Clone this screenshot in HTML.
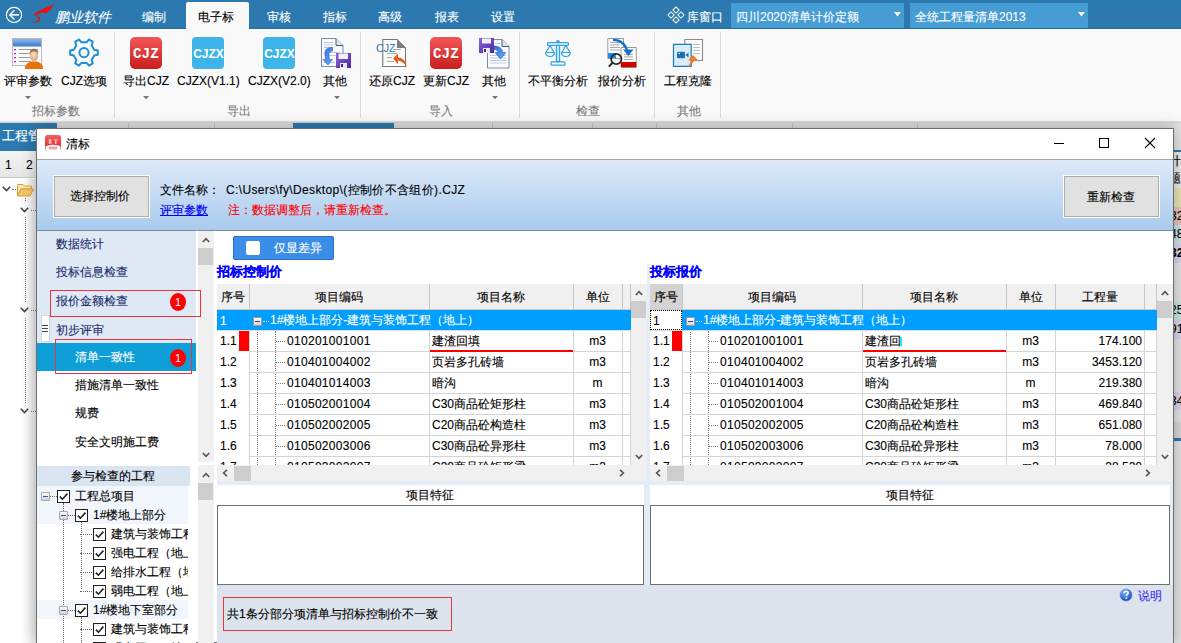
<!DOCTYPE html>
<html><head><meta charset="utf-8">
<style>
*{box-sizing:border-box;margin:0;padding:0}
html,body{width:1181px;height:643px;overflow:hidden;background:#fff;font-family:"Liberation Sans",sans-serif;font-size:12px;color:#000;position:relative}
.a{position:absolute}
.t{position:absolute;white-space:nowrap;line-height:20px;font-size:12px;-webkit-text-stroke:0.12px currentColor}
svg{position:absolute;overflow:visible}
</style></head><body>

<!-- ============ TITLE BAR ============ -->
<div class="a" style="left:0;top:0;width:1181px;height:29px;background:#2b79ae;border-bottom:1px solid #246c9e"></div>
<svg style="left:5px;top:6px" width="18" height="18" viewBox="0 0 18 18"><circle cx="9" cy="8.9" r="7.6" fill="none" stroke="#fff" stroke-width="1.2"/><path d="M14 8.9H5M9.4 4.3L4.8 8.9L9.4 13.5" fill="none" stroke="#eef4f8" stroke-width="1.6"/></svg>
<svg style="left:28px;top:2px" width="30" height="26" viewBox="0 0 30 26"><path d="M25.5 3.2L21.9 7.7L17.4 11.7L16.8 9.9C12.5 10.5 8.5 12 7 13.3C9 14.3 11.2 15.5 11 17C10.7 18.8 7.5 20.2 4.9 20.7C8.5 20.6 12.6 19 12.1 16.5C11.7 14.8 8.5 13.6 6.2 12.4C10 9.3 17 5.6 25.5 3.2Z" fill="#f00c0c" stroke="#f00c0c" stroke-width="0.5" stroke-linejoin="round"/></svg>
<div class="t" style="left:55px;top:6.5px;font-size:14px;color:#fff;font-style:italic;letter-spacing:0">鹏业软件</div>
<div class="t" style="left:142px;top:7px;font-size:12px;color:#fff">编制</div>
<div class="a" style="left:186px;top:2px;width:63px;height:27px;background:#f9f9f9;border-radius:2px 2px 0 0"></div>
<div class="t" style="left:198px;top:7px;font-size:12px;color:#000">电子标</div>
<div class="t" style="left:267px;top:7px;font-size:12px;color:#fff">审核</div>
<div class="t" style="left:323px;top:7px;font-size:12px;color:#fff">指标</div>
<div class="t" style="left:378px;top:7px;font-size:12px;color:#fff">高级</div>
<div class="t" style="left:435px;top:7px;font-size:12px;color:#fff">报表</div>
<div class="t" style="left:491px;top:7px;font-size:12px;color:#fff">设置</div>
<svg style="left:666px;top:5px" width="20" height="20" viewBox="0 0 20 20"><g transform="rotate(45 10 10)" fill="none" stroke="#fff" stroke-width="1"><rect x="4.3" y="4.3" width="4.4" height="4.4"/><rect x="11.3" y="4.3" width="4.4" height="4.4"/><rect x="4.3" y="11.3" width="4.4" height="4.4"/><rect x="11.3" y="11.3" width="4.4" height="4.4"/></g></svg>
<div class="t" style="left:687px;top:7px;font-size:12px;color:#fff">库窗口</div>
<div class="a" style="left:731px;top:3px;width:173px;height:25px;background:#459dd4"></div>
<div class="t" style="left:736px;top:7px;font-size:12px;color:#fff">四川2020清单计价定额</div>
<svg style="left:894px;top:12px" width="7" height="5" viewBox="0 0 7 5"><path d="M0 0H7L3.5 4.5Z" fill="#fff"/></svg>
<div class="a" style="left:910px;top:3px;width:178px;height:25px;background:#459dd4"></div>
<div class="t" style="left:915px;top:7px;font-size:12px;color:#fff">全统工程量清单2013</div>
<svg style="left:1078px;top:12px" width="7" height="5" viewBox="0 0 7 5"><path d="M0 0H7L3.5 4.5Z" fill="#fff"/></svg>

<!-- ============ RIBBON ============ -->
<div class="a" style="left:0;top:29px;width:1181px;height:93px;background:#f9f9f9;border-bottom:1px solid #e2e2e2"></div>
<!-- ribbon labels -->
<div class="t" style="left:4px;top:71px">评审参数</div>
<div class="t" style="left:61px;top:71px">CJZ选项</div>
<div class="t" style="left:123px;top:71px">导出CJZ</div>
<div class="t" style="left:177px;top:71px">CJZX(V1.1)</div>
<div class="t" style="left:248px;top:71px">CJZX(V2.0)</div>
<div class="t" style="left:323px;top:71px">其他</div>
<div class="t" style="left:369px;top:71px">还原CJZ</div>
<div class="t" style="left:423px;top:71px">更新CJZ</div>
<div class="t" style="left:482px;top:71px">其他</div>
<div class="t" style="left:528px;top:71px">不平衡分析</div>
<div class="t" style="left:598px;top:71px">报价分析</div>
<div class="t" style="left:664px;top:71px">工程克隆</div>
<!-- group labels -->
<div class="t" style="left:32px;top:101px;color:#7b7b7b">招标参数</div>
<div class="t" style="left:227px;top:101px;color:#7b7b7b">导出</div>
<div class="t" style="left:429px;top:101px;color:#7b7b7b">导入</div>
<div class="t" style="left:576px;top:101px;color:#7b7b7b">检查</div>
<div class="t" style="left:677px;top:101px;color:#7b7b7b">其他</div>
<!-- separators -->
<div class="a" style="left:114px;top:32px;width:1px;height:86px;background:#dadada"></div>
<div class="a" style="left:360px;top:32px;width:1px;height:86px;background:#dadada"></div>
<div class="a" style="left:519px;top:32px;width:1px;height:86px;background:#dadada"></div>
<div class="a" style="left:654px;top:32px;width:1px;height:86px;background:#dadada"></div>
<div class="a" style="left:720px;top:32px;width:1px;height:86px;background:#dadada"></div>
<!-- dropdown arrows -->
<svg style="left:25px;top:96px" width="6" height="4" viewBox="0 0 6 4"><path d="M0 0H6L3 3.2Z" fill="#777"/></svg>
<svg style="left:143px;top:96px" width="6" height="4" viewBox="0 0 6 4"><path d="M0 0H6L3 3.2Z" fill="#777"/></svg>
<svg style="left:334px;top:96px" width="6" height="4" viewBox="0 0 6 4"><path d="M0 0H6L3 3.2Z" fill="#777"/></svg>
<svg style="left:492px;top:96px" width="6" height="4" viewBox="0 0 6 4"><path d="M0 0H6L3 3.2Z" fill="#777"/></svg>

<!-- icon: 评审参数 -->
<svg style="left:12px;top:38px" width="32" height="31" viewBox="0 0 32 31">
<defs><linearGradient id="gbar" x1="0" y1="0" x2="0" y2="1"><stop offset="0" stop-color="#8fb8ec"/><stop offset="1" stop-color="#3a78d0"/></linearGradient>
<radialGradient id="gface" cx=".45" cy=".4" r=".6"><stop offset="0" stop-color="#fbe3c8"/><stop offset="1" stop-color="#d9a67a"/></radialGradient></defs>
<rect x="0.5" y="0.5" width="29" height="27" fill="#fbfbfb" stroke="#b9b9b9"/>
<rect x="1" y="1" width="28" height="7.5" fill="url(#gbar)"/>
<g fill="#d000d0"><rect x="2" y="11" width="2" height="1.2"/><rect x="2" y="15" width="2" height="1.2"/><rect x="2" y="19" width="2" height="1.2"/><rect x="2" y="23" width="2" height="1.2"/></g>
<g fill="#9a9a9a"><rect x="7" y="11" width="19" height="1"/><rect x="7" y="15" width="12" height="1"/><rect x="7" y="19" width="12" height="1"/><rect x="7" y="23" width="12" height="1"/></g>
<path d="M13 31C13 26 16 23.5 22 23.5C28 23.5 31 26 31 31Z" fill="#e8710a"/>
<ellipse cx="22" cy="17.5" rx="4.2" ry="5.5" fill="url(#gface)"/>
<path d="M17.8 16C17.6 12.5 19.5 10.8 22 10.8C24.5 10.8 26.4 12.5 26.2 16C25 14 23.5 13.5 22 13.6C20.5 13.5 19 14 17.8 16Z" fill="#9b7050"/>
</svg>
<!-- icon: gear -->
<svg style="left:64px;top:34px" width="40" height="38" viewBox="0 0 40 38">
<path d="M30.19 15.68 L33.83 16.41 L33.83 20.79 L30.19 21.52 L27.63 25.96 L28.81 29.48 L25.02 31.67 L22.56 28.89 L17.44 28.89 L14.98 31.67 L11.19 29.48 L12.37 25.96 L9.81 21.52 L6.17 20.79 L6.17 16.41 L9.81 15.68 L12.37 11.24 L11.19 7.72 L14.98 5.53 L17.44 8.31 L22.56 8.31 L25.02 5.53 L28.81 7.72 L27.63 11.24Z" fill="none" stroke="#1b8fd8" stroke-width="2" stroke-linejoin="round"/>
<circle cx="20" cy="18.6" r="4.6" fill="none" stroke="#1b8fd8" stroke-width="2"/>
</svg>
<!-- icon: CJZ red -->
<svg style="left:130px;top:37px" width="32" height="32" viewBox="0 0 32 32">
<defs><linearGradient id="gred" x1="0" y1="0" x2="0" y2="1"><stop offset="0" stop-color="#f25656"/><stop offset="1" stop-color="#c81e1e"/></linearGradient></defs>
<rect x="0" y="0" width="32" height="32" rx="5" fill="url(#gred)"/>
<text x="3" y="20.7" font-family="Liberation Mono" font-weight="bold" font-size="14" fill="#fff" textLength="25.8" lengthAdjust="spacingAndGlyphs">CJZ</text>
</svg>
<!-- icon: CJZX blue 1 -->
<svg style="left:192px;top:37px" width="32" height="32" viewBox="0 0 32 32">
<rect x="0" y="0" width="32" height="32" rx="4" fill="#3db5ea"/>
<text x="1.2" y="21.3" font-family="Liberation Sans" font-weight="bold" font-size="13.5" fill="#fff" textLength="30.5" lengthAdjust="spacingAndGlyphs">CJZX</text>
</svg>
<svg style="left:263px;top:37px" width="32" height="32" viewBox="0 0 32 32">
<rect x="0" y="0" width="32" height="32" rx="4" fill="#3db5ea"/>
<text x="1.2" y="21.3" font-family="Liberation Sans" font-weight="bold" font-size="13.5" fill="#fff" textLength="30.5" lengthAdjust="spacingAndGlyphs">CJZX</text>
</svg>
<!-- icon: 其他 (doc + arrow + floppy) -->
<svg style="left:316px;top:34px" width="40" height="38" viewBox="0 0 40 38">
<defs><linearGradient id="gfl" x1="0" y1="0" x2="1" y2="1"><stop offset="0" stop-color="#8a62d8"/><stop offset="1" stop-color="#4a2aa0"/></linearGradient>
<linearGradient id="garr" x1="0" y1="0" x2="1" y2="1"><stop offset="0" stop-color="#2a6ee0"/><stop offset="1" stop-color="#6ab0f0"/></linearGradient></defs>
<path d="M5.5 4.5H20L27 11.5V32.5H5.5Z" fill="#fbfcff" stroke="#7d8aa8"/>
<path d="M20 4.5V11.5H27" fill="#dfe6f5" stroke="#4a5570"/>
<g fill="#b8c0d0"><rect x="8" y="8" width="9" height=".9"/><rect x="8" y="10.5" width="9" height=".9"/><rect x="8" y="13" width="9" height=".9"/><rect x="12" y="18" width="12" height=".9"/><rect x="12" y="21" width="12" height=".9"/><rect x="8" y="28" width="11" height=".9"/></g>
<path d="M16.5 13.5C11 13 8 16 9 21L9.5 25.5L7 25.5L12 31L16.5 25.5L13.5 25.5L13 21C12.8 18.5 14 17 16.5 17Z" fill="url(#garr)" stroke="#1a4fb8" stroke-width=".5"/>
<rect x="20" y="19" width="15" height="15" fill="url(#gfl)"/>
<rect x="22.5" y="19.5" width="9.5" height="5.5" fill="#f2f0f8"/>
<rect x="24" y="29" width="7" height="5" fill="#e8e6f0"/>
<rect x="25" y="30" width="2" height="3" fill="#3a2a80"/>
</svg>
<!-- icon: 还原CJZ -->
<svg style="left:370px;top:34px" width="42" height="38" viewBox="0 0 42 38">
<path d="M12.8 5.5H27L35.5 14V32.5H12.8Z" fill="#fdfdfd" stroke="#777" stroke-width="1.1"/>
<path d="M27 5.5L35.5 14H27Z" fill="#7d7d7d"/>
<g fill="#a8a8a8"><rect x="23" y="15" width="8" height="1"/><rect x="17" y="19" width="10" height="1"/><rect x="17" y="23" width="5" height="1"/><rect x="17" y="27" width="7" height="1"/></g>
<text x="6" y="18" font-family="Liberation Sans" font-size="11" fill="#2a78b8" textLength="19.5" lengthAdjust="spacingAndGlyphs">CJZ</text>
<path d="M36.5 33C36.5 27 33 24 28 23.5V19.5L23 24.5L28 30V26.5C31.5 27 34.5 29 36.5 33Z" fill="#ea5a12"/>
</svg>
<!-- icon: 更新CJZ red -->
<svg style="left:430px;top:37px" width="32" height="32" viewBox="0 0 32 32">
<rect x="0" y="0" width="32" height="32" rx="5" fill="url(#gred)"/>
<text x="3" y="20.7" font-family="Liberation Mono" font-weight="bold" font-size="14" fill="#fff" textLength="25.8" lengthAdjust="spacingAndGlyphs">CJZ</text>
</svg>
<!-- icon: 其他 2 (floppy + doc + arrow) -->
<svg style="left:475px;top:34px" width="40" height="38" viewBox="0 0 40 38">
<path d="M12.5 5.5H27L34 12.5V34H12.5Z" fill="#fbfcff" stroke="#7d8aa8"/>
<path d="M27 5.5V12.5H34" fill="#dfe6f5" stroke="#4a5570"/>
<g fill="#b8c0d0"><rect x="15" y="21" width="16" height=".9"/><rect x="15" y="23.5" width="16" height=".9"/><rect x="15" y="26" width="16" height=".9"/><rect x="15" y="28.5" width="16" height=".9"/><rect x="20" y="9" width="5" height=".9"/></g>
<rect x="4" y="4" width="15" height="15" fill="url(#gfl)"/>
<rect x="7" y="4.5" width="9" height="5" fill="#f2f0f8"/>
<rect x="8" y="14" width="7" height="5" fill="#e8e6f0"/>
<rect x="9" y="15" width="2" height="3" fill="#3a2a80"/>
<path d="M19 12C24 12 27 14 28 18.5L31 18.5L25.5 25L20 18.5L23 18.5C22.5 16.5 21 15.5 19 15.5Z" fill="url(#garr)" stroke="#1a4fb8" stroke-width=".5"/>
</svg>
<!-- icon: 不平衡分析 (balance) -->
<svg style="left:538px;top:34px" width="40" height="38" viewBox="0 0 40 38">
<g fill="none" stroke="#2ea3e6" stroke-width="1.2">
<rect x="9.6" y="8.6" width="20.8" height="2.8" rx=".6"/>
<rect x="18.4" y="11.4" width="3.2" height="16.2" fill="#bfe3f7"/>
<rect x="13" y="27.8" width="14" height="3.4" rx=".6"/>
<path d="M12.1 11.5L8.2 18.2M12.1 11.5L15.9 18.2"/><path d="M27.9 11.5L24 18.2M27.9 11.5L31.8 18.2"/>
<path d="M7.6 18.5H16.6C16.3 21 14.6 22.6 12.1 22.6C9.6 22.6 7.9 21 7.6 18.5Z"/>
<path d="M23.4 18.5H32.4C32.1 21 30.4 22.6 27.9 22.6C25.4 22.6 23.7 21 23.4 18.5Z"/>
</g>
<circle cx="20" cy="7.6" r="1.7" fill="#2ea3e6"/>
</svg>
<!-- icon: 报价分析 -->
<svg style="left:600px;top:34px" width="40" height="38" viewBox="0 0 40 38">
<path d="M7.8 4.5H23.5V24.5H7.8Z" fill="#fdfdfd" stroke="#9a9a9a"/>
<g fill="#a0a0a0"><rect x="10" y="8" width="10" height=".9"/><rect x="10" y="10.5" width="10" height=".9"/><rect x="10" y="13" width="10" height=".9"/><rect x="10" y="15.5" width="10" height=".9"/></g>
<rect x="8" y="19" width="8" height="5" fill="#1a8ef0"/>
<path d="M21 13.5H36.3V33.3H21Z" fill="#fdfdfd" stroke="#9a9a9a"/>
<g fill="#a0a0a0"><rect x="24" y="20" width="9" height=".9"/><rect x="24" y="22.5" width="9" height=".9"/><rect x="24" y="25" width="9" height=".9"/></g>
<rect x="21" y="28" width="15.3" height="5.3" fill="#d40000"/>
<path d="M13 4.8C20 4.5 25.5 8 28 15.5H33.5L28.3 22L23 15.5H25.5C23.5 10.5 19.5 7.5 13 7Z" fill="#1670d0"/>
<circle cx="16.3" cy="25" r="5.2" fill="none" stroke="#2a2a2a" stroke-width="1.8"/>
<path d="M12.5 28.8L8.8 32.6" stroke="#2a2a2a" stroke-width="2"/>
</svg>
<!-- icon: 工程克隆 -->
<svg style="left:672px;top:34px" width="36" height="38" viewBox="0 0 36 38">
<path d="M12.8 5.5H30.5V26.5H12.8Z" fill="#fdfdfd" stroke="#8a8a8a" stroke-width="1.1"/>
<g fill="#b8b8b8"><rect x="21" y="10" width="7" height=".9"/><rect x="21" y="13" width="7" height=".9"/><rect x="21" y="16" width="7" height=".9"/><rect x="21" y="19" width="7" height=".9"/></g>
<path d="M1.5 10.3H19.2V32.3H1.5Z" fill="#dcedf9" stroke="#1a7ac0" stroke-width="1.2"/>
<rect x="5" y="17.7" width="8" height="6.5" rx="1.3" fill="#1a70b0"/>
<path d="M13.5 21L16.5 18.5V23.5Z" fill="#1a70b0"/>
<circle cx="7.2" cy="19.6" r=".8" fill="#dcedf9"/>
<path d="M15.5 33.5C17 30 18.5 28 20.3 26.5L16 26.5L21 21L26.5 26.5H23C21 28.5 18.5 31 15.5 33.5Z" fill="#f47a30"/>
</svg>


<!-- ============ MAIN WINDOW BEHIND ============ -->
<div class="a" style="left:0;top:122px;width:1181px;height:7px;background:#dedede;border-top:1px solid #d0d0d0"></div>
<div class="a" style="left:128px;top:123px;width:1px;height:6px;background:#c4c4c4"></div>
<div class="a" style="left:214px;top:123px;width:1px;height:6px;background:#c4c4c4"></div>
<div class="a" style="left:293px;top:123px;width:101px;height:6px;background:#2b79ae"></div>
<div class="a" style="left:492px;top:123px;width:1px;height:6px;background:#c4c4c4"></div>
<div class="a" style="left:592px;top:123px;width:1px;height:6px;background:#c4c4c4"></div>
<div class="a" style="left:656px;top:123px;width:1px;height:6px;background:#c4c4c4"></div>
<div class="a" style="left:792px;top:123px;width:1px;height:6px;background:#c4c4c4"></div>
<div class="a" style="left:917px;top:123px;width:1px;height:6px;background:#c4c4c4"></div>
<div class="a" style="left:0;top:123px;width:57px;height:28px;background:#2b79ae"></div>
<div class="t" style="left:2px;top:126px;font-size:13px;color:#fff">工程管</div>
<div class="a" style="left:0;top:151px;width:37px;height:27px;background:linear-gradient(#f4f4f4,#e6e6e6);border-bottom:1px solid #c9c9c9"></div>
<div class="t" style="left:5px;top:155px;font-size:12px;color:#000">1</div><div class="t" style="left:26px;top:155px;font-size:12px;color:#000">2</div>
<div class="a" style="left:0;top:179px;width:37px;height:464px;background:linear-gradient(90deg,#fff 0,#fff 22px,#e8e8e8 37px)"></div>

<!-- left background tree -->
<svg style="left:2px;top:186px" width="9" height="6" viewBox="0 0 9 6"><path d="M0.8 0.8L4.5 4.6L8.2 0.8" fill="none" stroke="#444" stroke-width="1.6"/></svg>
<div class="a" style="left:12px;top:189px;width:4px;height:0;border-top:1px dotted #777"></div>
<svg style="left:17px;top:183px" width="17" height="14" viewBox="0 0 17 14"><path d="M0.5 1.5H6L7.5 3H14.5V6H4L0.5 13Z" fill="#fbe7b8" stroke="#e0a030"/><path d="M0.5 13L4 6H16.5L13 13Z" fill="#f5c66a" stroke="#e0a030"/></svg>
<div class="a" style="left:25px;top:198px;width:0;height:3px;border-left:1px dotted #777"></div>
<svg style="left:20px;top:207px" width="9" height="6" viewBox="0 0 9 6"><path d="M0.8 0.8L4.5 4.6L8.2 0.8" fill="none" stroke="#444" stroke-width="1.6"/></svg>
<div class="a" style="left:31px;top:210px;width:5px;height:0;border-top:1px dotted #777"></div>
<div class="a" style="left:25px;top:217px;width:0;height:85px;border-left:1px dotted #777"></div>
<svg style="left:20px;top:307px" width="9" height="6" viewBox="0 0 9 6"><path d="M0.8 0.8L4.5 4.6L8.2 0.8" fill="none" stroke="#444" stroke-width="1.6"/></svg>
<div class="a" style="left:31px;top:310px;width:5px;height:0;border-top:1px dotted #777"></div>
<div class="a" style="left:25px;top:318px;width:0;height:85px;border-left:1px dotted #777"></div>
<svg style="left:20px;top:408px" width="9" height="6" viewBox="0 0 9 6"><path d="M0.8 0.8L4.5 4.6L8.2 0.8" fill="none" stroke="#444" stroke-width="1.6"/></svg>
<div class="a" style="left:31px;top:411px;width:5px;height:0;border-top:1px dotted #777"></div>
<div class="a" style="left:36px;top:143px;width:1px;height:500px;background:#8a6a2a;opacity:0"></div>
<!-- right strip -->
<div class="a" style="left:1174px;top:123px;width:7px;height:520px;background:#e2e2e2"></div>
<div class="a" style="left:1174px;top:150px;width:7px;height:2px;background:#2b79ae"></div>
<div class="a" style="left:1174px;top:152px;width:7px;height:36px;background:#e9e9e9"></div>
<div class="a" style="left:1174px;top:188px;width:7px;height:19px;background:#e7e4b4"></div>
<div class="a" style="left:1174px;top:207px;width:7px;height:18px;background:#e6c3b6"></div>
<div class="a" style="left:1174px;top:225px;width:7px;height:19px;background:#c8e5e3"></div>
<div class="a" style="left:1174px;top:244px;width:7px;height:19px;background:#dad3ea"></div>
<div class="a" style="left:1174px;top:301px;width:7px;height:19px;background:#c8e5e3"></div>
<div class="a" style="left:1174px;top:320px;width:7px;height:19px;background:#dad3ea"></div>
<div class="a" style="left:1174px;top:392px;width:7px;height:18px;background:#dad3ea"></div>
<div class="a" style="left:1174px;top:422px;width:7px;height:16px;background:#d6d6d6"></div>
<div class="a" style="left:1174px;top:438px;width:7px;height:3px;background:#2b79ae"></div>
<div class="a" style="left:1174px;top:152px;width:7px;height:36px;overflow:hidden"><div class="t" style="left:-5px;top:1px;font-size:12px;line-height:17px">计<br>题</div></div>
<div class="a" style="left:1174px;top:188px;width:7px;height:240px;overflow:hidden">
<div class="t" style="left:-4px;top:19px;font-size:12px;line-height:19px">32</div>
<div class="t" style="left:-4px;top:37px;font-size:12px;line-height:19px">48</div>
<div class="t" style="left:-4px;top:56px;font-size:12px;line-height:19px;font-weight:bold">32</div>
<div class="t" style="left:-4px;top:113px;font-size:12px;line-height:19px">25</div>
<div class="t" style="left:-4px;top:132px;font-size:12px;line-height:19px">91</div>
<div class="t" style="left:-4px;top:204px;font-size:12px;line-height:19px">34</div>
</div>
<!-- ============ DIALOG ============ -->
<div class="a" style="left:36px;top:128px;width:1138px;height:515px;background:#fff;border:1px solid #6e6e6e;box-shadow:0 0 14px rgba(0,0,0,.28)"></div>

<!-- dialog title bar -->
<svg style="left:45px;top:135px" width="16" height="16" viewBox="0 0 16 16">
<defs><linearGradient id="gti" x1="0" y1="0" x2="0" y2="1"><stop offset="0" stop-color="#f46060"/><stop offset="1" stop-color="#dc2222"/></linearGradient></defs>
<rect x="0" y="0" width="16" height="16" rx="2.5" fill="url(#gti)"/>
<g fill="#f9d0d0"><rect x="3.8" y="4.2" width="1" height="4.6"/><rect x="5.2" y="4.2" width="1.2" height="4.6"/><rect x="9" y="4.4" width="3.5" height="1"/><rect x="10" y="6" width="1.5" height="2.8"/></g>
<path d="M0.5 11.5C2.5 10.2 4 10.6 5.5 10C7.5 9.4 9 9.6 10.5 10.1C12.5 10.6 14 10.2 15.5 11.5V15C15.5 15.5 15 16 14.5 16H1.5C1 16 .5 15.5 .5 15Z" fill="#fff"/>
<rect x="4" y="12.3" width="8" height="1.6" rx=".8" fill="none" stroke="#e04848" stroke-width=".7"/>
</svg>
<div class="t" style="left:66px;top:134px;font-size:12px">清标</div>
<div class="a" style="left:1054px;top:143px;width:10px;height:1px;background:#000"></div>
<div class="a" style="left:1099px;top:138px;width:10px;height:10px;border:1px solid #000"></div>
<svg style="left:1145px;top:138px" width="10" height="10" viewBox="0 0 10 10"><path d="M0 0L10 10M10 0L0 10" stroke="#000" stroke-width="1.1"/></svg>
<div class="a" style="left:37px;top:159px;width:1136px;height:1px;background:#a6a6a6"></div>

<!-- header gradient -->
<div class="a" style="left:37px;top:160px;width:1136px;height:70px;background:linear-gradient(#dde9f8,#a9cbee)"></div>
<div class="a" style="left:37px;top:230px;width:1136px;height:1px;background:#7f8b99"></div>
<div class="a" style="left:53px;top:175px;width:97px;height:43px;border:1px solid #fff;background:#e1e1e1;box-shadow:inset 0 0 0 1px #adadad"></div>
<div class="t" style="left:70px;top:186px">选择控制价</div>
<div class="t" style="left:160px;top:180px">文件名称：</div>
<div class="t" style="left:226px;top:180px;letter-spacing:0.36px">C:\Users\fy\Desktop\(控制价不含组价).CJZ</div>
<div class="t" style="left:160px;top:200px;color:#0000ff;text-decoration:underline">评审参数</div>
<div class="t" style="left:228px;top:200px;color:#ff0000">注：数据调整后，请重新检查。</div>
<div class="a" style="left:1063px;top:175px;width:97px;height:43px;border:1px solid #fff;background:#e1e1e1;box-shadow:inset 0 0 0 1px #adadad"></div>
<div class="t" style="left:1087px;top:187px">重新检查</div>

<!-- left nav top -->
<div class="a" style="left:37px;top:231px;width:159px;height:112px;background:#dee9f5"></div>
<div class="a" style="left:37px;top:343px;width:159px;height:28px;background:#0e9fd8"></div>
<div class="a" style="left:37px;top:371px;width:159px;height:91px;background:#fff"></div>
<div class="a" style="left:196px;top:231px;width:2px;height:231px;background:#fff"></div><div class="a" style="left:198px;top:231px;width:16px;height:231px;background:#f0f0f0"></div>
<svg style="left:202px;top:237px" width="8" height="6" viewBox="0 0 8 6"><path d="M0.8 5L4 1.6L7.2 5" fill="none" stroke="#555" stroke-width="1.6"/></svg>
<div class="a" style="left:198px;top:248px;width:15px;height:17px;background:#cdcdcd"></div>
<svg style="left:202px;top:452px" width="8" height="6" viewBox="0 0 8 6"><path d="M0.8 1L4 4.4L7.2 1" fill="none" stroke="#555" stroke-width="1.6"/></svg>
<div class="t" style="left:56px;top:234px;color:#1b2d6b">数据统计</div>
<div class="t" style="left:56px;top:262px;color:#1b2d6b">投标信息检查</div>
<div class="t" style="left:56px;top:291px;color:#1b2d6b">报价金额检查</div>
<div class="t" style="left:56px;top:320px;color:#1b2d6b">初步评审</div>
<div class="t" style="left:75px;top:347px;color:#fff">清单一致性</div>
<div class="t" style="left:75px;top:375px">措施清单一致性</div>
<div class="t" style="left:75px;top:403px">规费</div>
<div class="t" style="left:75px;top:432px">安全文明施工费</div>
<div class="a" style="left:50px;top:290px;width:151px;height:27px;border:1px solid #e8343a"></div>
<div class="a" style="left:55px;top:339px;width:137px;height:35px;border:1px solid #e8343a"></div>
<div class="a" style="left:170px;top:293px;width:16px;height:18px;border-radius:50%;background:#ff0000;color:#fff;font-size:11px;line-height:18px;text-align:center">1</div>
<div class="a" style="left:170px;top:349px;width:16px;height:18px;border-radius:50%;background:#ff0000;color:#fff;font-size:11px;line-height:18px;text-align:center">1</div>
<div class="a" style="left:41px;top:315px;width:9px;height:27px;background:#fff;border:1px solid #d4dbe4;border-right-color:#c8ced6"></div>
<div class="a" style="left:42px;top:325px;width:6px;height:1px;background:#444"></div>
<div class="a" style="left:42px;top:328px;width:6px;height:1px;background:#444"></div>
<div class="a" style="left:42px;top:331px;width:6px;height:1px;background:#444"></div>

<!-- main content -->
<div class="a" style="left:214px;top:231px;width:959px;height:254px;background:#fff"></div>
<div class="a" style="left:647px;top:264px;width:3px;height:321px;background:#e3ecf7"></div>
<div class="a" style="left:233px;top:236px;width:101px;height:24px;background:#3a8ee8;border:1px solid #2a6fc4;border-radius:2px"></div>
<div class="a" style="left:246px;top:241px;width:14px;height:14px;background:#fff;border-radius:2px"></div>
<div class="t" style="left:274px;top:238px;color:#fff">仅显差异</div>
<div class="t" style="left:217px;top:262px;color:#0000ff;font-weight:bold;font-size:13px">招标控制价</div>
<div class="t" style="left:650px;top:262px;color:#0000ff;font-weight:bold;font-size:13px">投标报价</div>
<div class="a" style="left:217px;top:284px;width:414px;height:181px;overflow:hidden;background:#fff">
<div class="a" style="left:0;top:0;width:414px;height:26px;background:#f0f0f0;border-bottom:1px solid #c9c9c9"></div>
<div class="a" style="left:32px;top:0;width:1px;height:25px;background:#c6c6c6"></div>
<div class="a" style="left:212px;top:0;width:1px;height:25px;background:#c6c6c6"></div>
<div class="a" style="left:356px;top:0;width:1px;height:25px;background:#c6c6c6"></div>
<div class="a" style="left:405px;top:0;width:1px;height:25px;background:#c6c6c6"></div>
<div class="a" style="left:413px;top:0;width:1px;height:25px;background:#c6c6c6"></div>
<div class="t" style="left:4px;top:2.5px">序号</div>
<div class="t" style="left:32px;top:2.5px;width:180px;text-align:center">项目编码</div>
<div class="t" style="left:212px;top:2.5px;width:144px;text-align:center">项目名称</div>
<div class="t" style="left:356px;top:2.5px;width:49px;text-align:center">单位</div>
<div class="a" style="left:0;top:26px;width:414px;height:20px;background:#009fff"></div>
<div class="t" style="left:3px;top:27px;line-height:21px;color:#fff">1</div>
<div class="a" style="left:36px;top:33px;width:9px;height:9px;border:1px solid #9a9a9a;background:linear-gradient(#fff,#d8d8d8)"></div>
<div class="a" style="left:38px;top:37px;width:5px;height:1px;background:#2a3f9a"></div>
<div class="a" style="left:46px;top:37px;width:6px;height:0;border-top:1px dotted #c8e8ff"></div>
<div class="t" style="left:53px;top:26px;line-height:21px;color:#fff">1#楼地上部分-建筑与装饰工程（地上）</div>
<div class="a" style="left:40px;top:43px;width:0;height:200px;border-left:1px dotted #777"></div>
<div class="a" style="left:58px;top:47px;width:0;height:200px;border-left:1px dotted #777"></div>
<div class="a" style="left:32px;top:67px;width:382px;height:1px;background:#d4d4d4"></div>
<div class="t" style="left:3px;top:47px;line-height:21px">1.1</div>
<div class="a" style="left:59px;top:57px;width:9px;height:0;border-top:1px dotted #777"></div>
<div class="t" style="left:70px;top:47px;line-height:21px;letter-spacing:0.3px">010201001001</div>
<div class="t" style="left:215px;top:47px;line-height:21px">建渣回填</div>
<div class="t" style="left:356px;top:47px;line-height:21px;width:49px;text-align:center">m3</div>
<div class="a" style="left:32px;top:88px;width:382px;height:1px;background:#d4d4d4"></div>
<div class="t" style="left:3px;top:68px;line-height:21px">1.2</div>
<div class="a" style="left:59px;top:78px;width:9px;height:0;border-top:1px dotted #777"></div>
<div class="t" style="left:70px;top:68px;line-height:21px;letter-spacing:0.3px">010401004002</div>
<div class="t" style="left:215px;top:68px;line-height:21px">页岩多孔砖墙</div>
<div class="t" style="left:356px;top:68px;line-height:21px;width:49px;text-align:center">m3</div>
<div class="a" style="left:32px;top:109px;width:382px;height:1px;background:#d4d4d4"></div>
<div class="t" style="left:3px;top:89px;line-height:21px">1.3</div>
<div class="a" style="left:59px;top:99px;width:9px;height:0;border-top:1px dotted #777"></div>
<div class="t" style="left:70px;top:89px;line-height:21px;letter-spacing:0.3px">010401014003</div>
<div class="t" style="left:215px;top:89px;line-height:21px">暗沟</div>
<div class="t" style="left:356px;top:89px;line-height:21px;width:49px;text-align:center">m</div>
<div class="a" style="left:32px;top:130px;width:382px;height:1px;background:#d4d4d4"></div>
<div class="t" style="left:3px;top:110px;line-height:21px">1.4</div>
<div class="a" style="left:59px;top:120px;width:9px;height:0;border-top:1px dotted #777"></div>
<div class="t" style="left:70px;top:110px;line-height:21px;letter-spacing:0.3px">010502001004</div>
<div class="t" style="left:215px;top:110px;line-height:21px">C30商品砼矩形柱</div>
<div class="t" style="left:356px;top:110px;line-height:21px;width:49px;text-align:center">m3</div>
<div class="a" style="left:32px;top:151px;width:382px;height:1px;background:#d4d4d4"></div>
<div class="t" style="left:3px;top:131px;line-height:21px">1.5</div>
<div class="a" style="left:59px;top:141px;width:9px;height:0;border-top:1px dotted #777"></div>
<div class="t" style="left:70px;top:131px;line-height:21px;letter-spacing:0.3px">010502002005</div>
<div class="t" style="left:215px;top:131px;line-height:21px">C20商品砼构造柱</div>
<div class="t" style="left:356px;top:131px;line-height:21px;width:49px;text-align:center">m3</div>
<div class="a" style="left:32px;top:172px;width:382px;height:1px;background:#d4d4d4"></div>
<div class="t" style="left:3px;top:152px;line-height:21px">1.6</div>
<div class="a" style="left:59px;top:162px;width:9px;height:0;border-top:1px dotted #777"></div>
<div class="t" style="left:70px;top:152px;line-height:21px;letter-spacing:0.3px">010502003006</div>
<div class="t" style="left:215px;top:152px;line-height:21px">C30商品砼异形柱</div>
<div class="t" style="left:356px;top:152px;line-height:21px;width:49px;text-align:center">m3</div>
<div class="a" style="left:32px;top:193px;width:382px;height:1px;background:#d4d4d4"></div>
<div class="t" style="left:3px;top:173px;line-height:21px">1.7</div>
<div class="a" style="left:59px;top:183px;width:9px;height:0;border-top:1px dotted #777"></div>
<div class="t" style="left:70px;top:173px;line-height:21px;letter-spacing:0.3px">010503002007</div>
<div class="t" style="left:215px;top:173px;line-height:21px">C30商品砼矩形梁</div>
<div class="t" style="left:356px;top:173px;line-height:21px;width:49px;text-align:center">m3</div>
<div class="a" style="left:32px;top:46px;width:1px;height:160px;background:#d4d4d4"></div>
<div class="a" style="left:212px;top:46px;width:1px;height:160px;background:#d4d4d4"></div>
<div class="a" style="left:356px;top:46px;width:1px;height:160px;background:#d4d4d4"></div>
<div class="a" style="left:405px;top:46px;width:1px;height:160px;background:#d4d4d4"></div>
<div class="a" style="left:413px;top:46px;width:1px;height:160px;background:#d4d4d4"></div>
<div class="a" style="left:22px;top:47px;width:10px;height:20px;background:#f00"></div>
<div class="a" style="left:213px;top:66px;width:143px;height:2px;background:#f00"></div>
<div class="a" style="left:0;top:46px;width:414px;height:1px;background:#dcdcdc"></div>
</div>
<div class="a" style="left:650px;top:284px;width:507px;height:181px;overflow:hidden;background:#fff">
<div class="a" style="left:0;top:0;width:507px;height:26px;background:#f0f0f0;border-bottom:1px solid #c9c9c9"></div>
<div class="a" style="left:0;top:0;width:32px;height:26px;background:#d3d3d3;border-bottom:1px solid #c9c9c9"></div>
<div class="a" style="left:32px;top:0;width:1px;height:25px;background:#c6c6c6"></div>
<div class="a" style="left:212px;top:0;width:1px;height:25px;background:#c6c6c6"></div>
<div class="a" style="left:356px;top:0;width:1px;height:25px;background:#c6c6c6"></div>
<div class="a" style="left:405px;top:0;width:1px;height:25px;background:#c6c6c6"></div>
<div class="a" style="left:494px;top:0;width:1px;height:25px;background:#c6c6c6"></div>
<div class="a" style="left:506px;top:0;width:1px;height:25px;background:#c6c6c6"></div>
<div class="t" style="left:4px;top:2.5px">序号</div>
<div class="t" style="left:32px;top:2.5px;width:180px;text-align:center">项目编码</div>
<div class="t" style="left:212px;top:2.5px;width:144px;text-align:center">项目名称</div>
<div class="t" style="left:356px;top:2.5px;width:49px;text-align:center">单位</div>
<div class="t" style="left:405px;top:2.5px;width:89px;text-align:center">工程量</div>
<div class="a" style="left:0;top:26px;width:507px;height:20px;background:#009fff"></div>
<div class="a" style="left:0;top:26px;width:32px;height:20px;background:#fff;border:1px dotted #000"></div>
<div class="t" style="left:3px;top:27px;line-height:21px">1</div>
<div class="a" style="left:36px;top:33px;width:9px;height:9px;border:1px solid #9a9a9a;background:linear-gradient(#fff,#d8d8d8)"></div>
<div class="a" style="left:38px;top:37px;width:5px;height:1px;background:#2a3f9a"></div>
<div class="a" style="left:46px;top:37px;width:6px;height:0;border-top:1px dotted #c8e8ff"></div>
<div class="t" style="left:53px;top:26px;line-height:21px;color:#fff">1#楼地上部分-建筑与装饰工程（地上）</div>
<div class="a" style="left:40px;top:43px;width:0;height:200px;border-left:1px dotted #777"></div>
<div class="a" style="left:58px;top:47px;width:0;height:200px;border-left:1px dotted #777"></div>
<div class="a" style="left:32px;top:67px;width:475px;height:1px;background:#d4d4d4"></div>
<div class="t" style="left:3px;top:47px;line-height:21px">1.1</div>
<div class="a" style="left:59px;top:57px;width:9px;height:0;border-top:1px dotted #777"></div>
<div class="t" style="left:70px;top:47px;line-height:21px;letter-spacing:0.3px">010201001001</div>
<div class="t" style="left:215px;top:47px;line-height:21px">建渣回</div>
<div class="t" style="left:356px;top:47px;line-height:21px;width:49px;text-align:center">m3</div>
<div class="t" style="left:405px;top:47px;line-height:21px;width:87px;text-align:right">174.100</div>
<div class="a" style="left:32px;top:88px;width:475px;height:1px;background:#d4d4d4"></div>
<div class="t" style="left:3px;top:68px;line-height:21px">1.2</div>
<div class="a" style="left:59px;top:78px;width:9px;height:0;border-top:1px dotted #777"></div>
<div class="t" style="left:70px;top:68px;line-height:21px;letter-spacing:0.3px">010401004002</div>
<div class="t" style="left:215px;top:68px;line-height:21px">页岩多孔砖墙</div>
<div class="t" style="left:356px;top:68px;line-height:21px;width:49px;text-align:center">m3</div>
<div class="t" style="left:405px;top:68px;line-height:21px;width:87px;text-align:right">3453.120</div>
<div class="a" style="left:32px;top:109px;width:475px;height:1px;background:#d4d4d4"></div>
<div class="t" style="left:3px;top:89px;line-height:21px">1.3</div>
<div class="a" style="left:59px;top:99px;width:9px;height:0;border-top:1px dotted #777"></div>
<div class="t" style="left:70px;top:89px;line-height:21px;letter-spacing:0.3px">010401014003</div>
<div class="t" style="left:215px;top:89px;line-height:21px">暗沟</div>
<div class="t" style="left:356px;top:89px;line-height:21px;width:49px;text-align:center">m</div>
<div class="t" style="left:405px;top:89px;line-height:21px;width:87px;text-align:right">219.380</div>
<div class="a" style="left:32px;top:130px;width:475px;height:1px;background:#d4d4d4"></div>
<div class="t" style="left:3px;top:110px;line-height:21px">1.4</div>
<div class="a" style="left:59px;top:120px;width:9px;height:0;border-top:1px dotted #777"></div>
<div class="t" style="left:70px;top:110px;line-height:21px;letter-spacing:0.3px">010502001004</div>
<div class="t" style="left:215px;top:110px;line-height:21px">C30商品砼矩形柱</div>
<div class="t" style="left:356px;top:110px;line-height:21px;width:49px;text-align:center">m3</div>
<div class="t" style="left:405px;top:110px;line-height:21px;width:87px;text-align:right">469.840</div>
<div class="a" style="left:32px;top:151px;width:475px;height:1px;background:#d4d4d4"></div>
<div class="t" style="left:3px;top:131px;line-height:21px">1.5</div>
<div class="a" style="left:59px;top:141px;width:9px;height:0;border-top:1px dotted #777"></div>
<div class="t" style="left:70px;top:131px;line-height:21px;letter-spacing:0.3px">010502002005</div>
<div class="t" style="left:215px;top:131px;line-height:21px">C20商品砼构造柱</div>
<div class="t" style="left:356px;top:131px;line-height:21px;width:49px;text-align:center">m3</div>
<div class="t" style="left:405px;top:131px;line-height:21px;width:87px;text-align:right">651.080</div>
<div class="a" style="left:32px;top:172px;width:475px;height:1px;background:#d4d4d4"></div>
<div class="t" style="left:3px;top:152px;line-height:21px">1.6</div>
<div class="a" style="left:59px;top:162px;width:9px;height:0;border-top:1px dotted #777"></div>
<div class="t" style="left:70px;top:152px;line-height:21px;letter-spacing:0.3px">010502003006</div>
<div class="t" style="left:215px;top:152px;line-height:21px">C30商品砼异形柱</div>
<div class="t" style="left:356px;top:152px;line-height:21px;width:49px;text-align:center">m3</div>
<div class="t" style="left:405px;top:152px;line-height:21px;width:87px;text-align:right">78.000</div>
<div class="a" style="left:32px;top:193px;width:475px;height:1px;background:#d4d4d4"></div>
<div class="t" style="left:3px;top:173px;line-height:21px">1.7</div>
<div class="a" style="left:59px;top:183px;width:9px;height:0;border-top:1px dotted #777"></div>
<div class="t" style="left:70px;top:173px;line-height:21px;letter-spacing:0.3px">010503002007</div>
<div class="t" style="left:215px;top:173px;line-height:21px">C30商品砼矩形梁</div>
<div class="t" style="left:356px;top:173px;line-height:21px;width:49px;text-align:center">m3</div>
<div class="t" style="left:405px;top:173px;line-height:21px;width:87px;text-align:right">38.520</div>
<div class="a" style="left:32px;top:46px;width:1px;height:160px;background:#d4d4d4"></div>
<div class="a" style="left:212px;top:46px;width:1px;height:160px;background:#d4d4d4"></div>
<div class="a" style="left:356px;top:46px;width:1px;height:160px;background:#d4d4d4"></div>
<div class="a" style="left:405px;top:46px;width:1px;height:160px;background:#d4d4d4"></div>
<div class="a" style="left:494px;top:46px;width:1px;height:160px;background:#d4d4d4"></div>
<div class="a" style="left:506px;top:46px;width:1px;height:160px;background:#d4d4d4"></div>
<div class="a" style="left:22px;top:47px;width:10px;height:20px;background:#f00"></div>
<div class="a" style="left:213px;top:66px;width:143px;height:2px;background:#f00"></div>
<div class="a" style="left:0;top:46px;width:507px;height:1px;background:#dcdcdc"></div>
</div>
<div class="a" style="left:900px;top:337px;width:2px;height:9px;background:#19e6ff"></div>
<!-- left vscroll -->
<div class="a" style="left:631px;top:284px;width:16px;height:181px;background:#f0f0f0"></div>
<svg style="left:635px;top:290px" width="8" height="6" viewBox="0 0 8 6"><path d="M0.8 5L4 1.6L7.2 5" fill="none" stroke="#555" stroke-width="1.6"/></svg>
<div class="a" style="left:631px;top:301px;width:15px;height:17px;background:#cdcdcd"></div>
<svg style="left:635px;top:454px" width="8" height="6" viewBox="0 0 8 6"><path d="M0.8 1L4 4.4L7.2 1" fill="none" stroke="#555" stroke-width="1.6"/></svg>
<!-- right vscroll -->
<div class="a" style="left:1157px;top:284px;width:16px;height:181px;background:#f0f0f0"></div>
<svg style="left:1161px;top:290px" width="8" height="6" viewBox="0 0 8 6"><path d="M0.8 5L4 1.6L7.2 5" fill="none" stroke="#555" stroke-width="1.6"/></svg>
<div class="a" style="left:1157px;top:301px;width:15px;height:17px;background:#cdcdcd"></div>
<svg style="left:1161px;top:454px" width="8" height="6" viewBox="0 0 8 6"><path d="M0.8 1L4 4.4L7.2 1" fill="none" stroke="#555" stroke-width="1.6"/></svg>
<!-- h scrollbars -->
<div class="a" style="left:217px;top:465px;width:430px;height:16px;background:#f0f0f0"></div>
<svg style="left:222px;top:469px" width="6" height="8" viewBox="0 0 6 8"><path d="M5 0.8L1.6 4L5 7.2" fill="none" stroke="#555" stroke-width="1.6"/></svg>
<div class="a" style="left:234px;top:466px;width:17px;height:15px;background:#cdcdcd"></div>
<svg style="left:619px;top:469px" width="6" height="8" viewBox="0 0 6 8"><path d="M1 0.8L4.4 4L1 7.2" fill="none" stroke="#555" stroke-width="1.6"/></svg>
<div class="a" style="left:650px;top:465px;width:523px;height:16px;background:#f0f0f0"></div>
<svg style="left:655px;top:469px" width="6" height="8" viewBox="0 0 6 8"><path d="M5 0.8L1.6 4L5 7.2" fill="none" stroke="#555" stroke-width="1.6"/></svg>
<div class="a" style="left:667px;top:466px;width:17px;height:15px;background:#cdcdcd"></div>
<svg style="left:1145px;top:469px" width="6" height="8" viewBox="0 0 6 8"><path d="M1 0.8L4.4 4L1 7.2" fill="none" stroke="#555" stroke-width="1.6"/></svg>
<div class="a" style="left:214px;top:481px;width:959px;height:4px;background:#e3ecf7"></div>
<div class="a" style="left:214px;top:465px;width:3px;height:20px;background:#fff"></div>
<!-- feature label + textareas -->
<div class="a" style="left:217px;top:485px;width:427px;height:100px;background:#fff"></div>
<div class="a" style="left:644px;top:481px;width:6px;height:104px;background:#e3ecf7"></div>
<div class="a" style="left:650px;top:485px;width:520px;height:100px;background:#fff"></div>
<div class="a" style="left:1170px;top:481px;width:3px;height:104px;background:#e3ecf7"></div>
<div class="t" style="left:406px;top:485px">项目特征</div>
<div class="t" style="left:886px;top:485px">项目特征</div>
<div class="a" style="left:217px;top:505px;width:427px;height:80px;border:1px solid #6e6e6e;background:#fff"></div>
<div class="a" style="left:650px;top:505px;width:520px;height:80px;border:1px solid #6e6e6e;background:#fff"></div>
<!-- bottom status -->
<div class="a" style="left:217px;top:585px;width:956px;height:58px;background:#dce3ec"></div>
<div class="a" style="left:647px;top:584px;width:3px;height:0px;background:#e3ecf7"></div>
<div class="a" style="left:223px;top:597px;width:229px;height:34px;border:1px solid #e8343a"></div>
<div class="t" style="left:227px;top:604px">共1条分部分项清单与招标控制价不一致</div>
<svg style="left:1119px;top:588px" width="14" height="14" viewBox="0 0 14 14">
<defs><radialGradient id="ghelp" cx=".4" cy=".3" r=".7"><stop offset="0" stop-color="#7fb4ff"/><stop offset="1" stop-color="#1546b8"/></radialGradient></defs>
<circle cx="7" cy="7" r="6.5" fill="url(#ghelp)" stroke="#c8d8f0" stroke-width="1"/>
<path d="M4.8 5.2C4.8 3.8 5.8 3.2 7 3.2C8.3 3.2 9.2 4 9.2 5C9.2 6.3 7.4 6.5 7.4 8" fill="none" stroke="#fff" stroke-width="1.4"/>
<rect x="6.6" y="9.2" width="1.6" height="1.6" fill="#fff"/>
</svg>
<div class="t" style="left:1138px;top:586px;color:#3a2cff">说明</div>

<!-- left nav bottom tree -->
<div class="a" style="left:37px;top:462px;width:159px;height:181px;background:#fff"></div>
<div class="a" style="left:198px;top:465px;width:16px;height:178px;background:#f0f0f0"></div>
<svg style="left:202px;top:472px" width="8" height="6" viewBox="0 0 8 6"><path d="M0.8 5L4 1.6L7.2 5" fill="none" stroke="#555" stroke-width="1.6"/></svg>
<div class="a" style="left:198px;top:483px;width:15px;height:17px;background:#cdcdcd"></div>
<div class="a" style="left:37px;top:466px;width:153px;height:20px;background:#dae5f2"></div>
<div class="t" style="left:71px;top:466px">参与检查的工程</div>
<div class="a" style="left:37px;top:486px;width:151px;height:157px;overflow:hidden">
<div class="a" style="left:0;top:0px;width:153px;height:19px;background:#f0f6fc"></div>
<div class="a" style="left:0;top:19px;width:153px;height:19px;background:#f0f6fc"></div>
<div class="a" style="left:0;top:114px;width:153px;height:19px;background:#f0f6fc"></div>
<div class="a" style="left:26px;top:17px;width:0;height:140px;border-left:1px dotted #666"></div>
<div class="a" style="left:44px;top:36px;width:0;height:67px;border-left:1px dotted #666"></div>
<div class="a" style="left:44px;top:131px;width:0;height:30px;border-left:1px dotted #666"></div>
<div class="a" style="left:4px;top:6px;width:9px;height:9px;border:1px solid #a8a8a8;border-radius:1px;background:linear-gradient(#fafafa,#d4d4d4)"></div>
<div class="a" style="left:6px;top:10px;width:5px;height:1px;background:#3050b0"></div>
<div class="a" style="left:13px;top:10px;width:7px;height:0;border-top:1px dotted #666"></div>
<div class="a" style="left:20px;top:4px;width:13px;height:13px;border:1px solid #222;background:#fff"></div>
<svg style="left:22px;top:6px" width="9" height="9" viewBox="0 0 9 9"><path d="M0.8 4.6L3.4 7.2L8.4 1.6" fill="none" stroke="#222" stroke-width="1.6"/></svg>
<div class="t" style="left:38px;top:0px">工程总项目</div>
<div class="a" style="left:22px;top:25px;width:9px;height:9px;border:1px solid #a8a8a8;border-radius:1px;background:linear-gradient(#fafafa,#d4d4d4)"></div>
<div class="a" style="left:24px;top:29px;width:5px;height:1px;background:#3050b0"></div>
<div class="a" style="left:31px;top:29px;width:7px;height:0;border-top:1px dotted #666"></div>
<div class="a" style="left:38px;top:23px;width:13px;height:13px;border:1px solid #222;background:#fff"></div>
<svg style="left:40px;top:25px" width="9" height="9" viewBox="0 0 9 9"><path d="M0.8 4.6L3.4 7.2L8.4 1.6" fill="none" stroke="#222" stroke-width="1.6"/></svg>
<div class="t" style="left:56px;top:19px">1#楼地上部分</div>
<div class="a" style="left:43px;top:48px;width:12px;height:0;border-top:1px dotted #666"></div>
<div class="a" style="left:56px;top:42px;width:13px;height:13px;border:1px solid #222;background:#fff"></div>
<svg style="left:58px;top:44px" width="9" height="9" viewBox="0 0 9 9"><path d="M0.8 4.6L3.4 7.2L8.4 1.6" fill="none" stroke="#222" stroke-width="1.6"/></svg>
<div class="t" style="left:74px;top:38px">建筑与装饰工程（地上）</div>
<div class="a" style="left:43px;top:67px;width:12px;height:0;border-top:1px dotted #666"></div>
<div class="a" style="left:56px;top:61px;width:13px;height:13px;border:1px solid #222;background:#fff"></div>
<svg style="left:58px;top:63px" width="9" height="9" viewBox="0 0 9 9"><path d="M0.8 4.6L3.4 7.2L8.4 1.6" fill="none" stroke="#222" stroke-width="1.6"/></svg>
<div class="t" style="left:74px;top:57px">强电工程（地上）</div>
<div class="a" style="left:43px;top:86px;width:12px;height:0;border-top:1px dotted #666"></div>
<div class="a" style="left:56px;top:80px;width:13px;height:13px;border:1px solid #222;background:#fff"></div>
<svg style="left:58px;top:82px" width="9" height="9" viewBox="0 0 9 9"><path d="M0.8 4.6L3.4 7.2L8.4 1.6" fill="none" stroke="#222" stroke-width="1.6"/></svg>
<div class="t" style="left:74px;top:76px">给排水工程（地上）</div>
<div class="a" style="left:43px;top:105px;width:12px;height:0;border-top:1px dotted #666"></div>
<div class="a" style="left:56px;top:99px;width:13px;height:13px;border:1px solid #222;background:#fff"></div>
<svg style="left:58px;top:101px" width="9" height="9" viewBox="0 0 9 9"><path d="M0.8 4.6L3.4 7.2L8.4 1.6" fill="none" stroke="#222" stroke-width="1.6"/></svg>
<div class="t" style="left:74px;top:95px">弱电工程（地上）</div>
<div class="a" style="left:22px;top:120px;width:9px;height:9px;border:1px solid #a8a8a8;border-radius:1px;background:linear-gradient(#fafafa,#d4d4d4)"></div>
<div class="a" style="left:24px;top:124px;width:5px;height:1px;background:#3050b0"></div>
<div class="a" style="left:31px;top:124px;width:7px;height:0;border-top:1px dotted #666"></div>
<div class="a" style="left:38px;top:118px;width:13px;height:13px;border:1px solid #222;background:#fff"></div>
<svg style="left:40px;top:120px" width="9" height="9" viewBox="0 0 9 9"><path d="M0.8 4.6L3.4 7.2L8.4 1.6" fill="none" stroke="#222" stroke-width="1.6"/></svg>
<div class="t" style="left:56px;top:114px">1#楼地下室部分</div>
<div class="a" style="left:43px;top:143px;width:12px;height:0;border-top:1px dotted #666"></div>
<div class="a" style="left:56px;top:137px;width:13px;height:13px;border:1px solid #222;background:#fff"></div>
<svg style="left:58px;top:139px" width="9" height="9" viewBox="0 0 9 9"><path d="M0.8 4.6L3.4 7.2L8.4 1.6" fill="none" stroke="#222" stroke-width="1.6"/></svg>
<div class="t" style="left:74px;top:133px">建筑与装饰工程（地下）</div>
<div class="a" style="left:43px;top:162px;width:12px;height:0;border-top:1px dotted #666"></div>
<div class="a" style="left:56px;top:156px;width:13px;height:13px;border:1px solid #222;background:#fff"></div>
<svg style="left:58px;top:158px" width="9" height="9" viewBox="0 0 9 9"><path d="M0.8 4.6L3.4 7.2L8.4 1.6" fill="none" stroke="#222" stroke-width="1.6"/></svg>
<div class="t" style="left:74px;top:152px">强电工程（地下）</div>
</div>
<!--DLG3-->
</body></html>
